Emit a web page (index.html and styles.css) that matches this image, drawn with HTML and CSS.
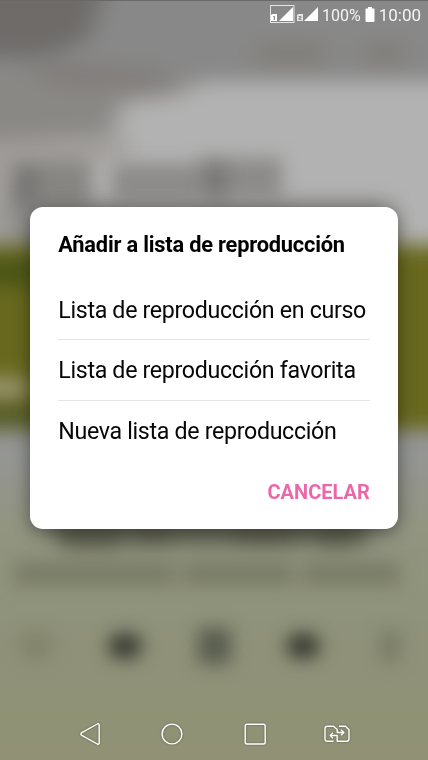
FILE: index.html
```html
<!DOCTYPE html>
<html lang="es">
<head>
    <meta charset="UTF-8">
    <meta name="viewport" content="width=device-width, initial-scale=1.0">
    <title>Añadir a lista de reproducción</title>
    <link rel="stylesheet" href="styles.css">
</head>
<body>
    <div class="screen">
        <!-- blurred music player behind the dialog -->
        <svg class="backdrop" viewBox="0 0 428 760" aria-hidden="true">
            <defs>
                <linearGradient id="player" x1="0" y1="430" x2="0" y2="760" gradientUnits="userSpaceOnUse">
                    <stop offset="0" stop-color="#96969a"/>
                    <stop offset="0.3" stop-color="#919580"/>
                    <stop offset="0.65" stop-color="#8f9279"/>
                    <stop offset="1" stop-color="#919275"/>
                </linearGradient>
                <filter id="soft" x="-60" y="-60" width="550" height="880" filterUnits="userSpaceOnUse" color-interpolation-filters="sRGB">
                    <feGaussianBlur stdDeviation="12 10"/>
                </filter>
                <filter id="fine" x="-60" y="-60" width="550" height="880" filterUnits="userSpaceOnUse" color-interpolation-filters="sRGB">
                    <feGaussianBlur stdDeviation="9"/>
                </filter>
            </defs>
            <g filter="url(#soft)">
                <rect x="-60" y="-60" width="550" height="520" fill="#b2b2b2"/>
                <rect x="-60" y="-60" width="550" height="141" fill="#888888"/>
                <path d="M-60-60H122L88 38L55 52L20 56H-60z" fill="#6e6b69"/>
                <path d="M-60 66H150L200 84L172 96L122 102L112 135L-60 142z" fill="#8a8885"/>
                <path d="M10 58L165 70V88H60z" fill="#7d7976" opacity="0.7"/>
                <path d="M-60 139H128V158H-60z" fill="#a09c98"/>
                <path d="M-60 156H90V250H-60z" fill="#a19e9b"/>
                <path d="M10 200H390V250H10z" fill="#8f8e8c"/>
                <path d="M258 43H325V63H258zM365 43H405V63H365z" fill="#7e7a72" opacity="0.8"/>
                <rect x="-60" y="245" width="550" height="185" fill="#68691e"/>
                <rect x="-60" y="258" width="95" height="28" fill="#4a5416"/>
                <rect x="-60" y="379" width="90" height="18" fill="#a39c7e"/>
                <rect x="-60" y="405" width="95" height="22" fill="#555b28"/>
                <rect x="-60" y="430" width="550" height="430" fill="url(#player)"/>
            </g>
            <g filter="url(#fine)">
                <path d="M12 162H90V210H12zM112 164H196V202H112zM196 158H282V199H196z" fill="#7c7a77" opacity="0.7"/>
                <path d="M14 168H38V206H14zM204 160H228V202H204z" fill="#6a6865" opacity="0.5"/>
                <path d="M55 516H368V546H55z" fill="#5c5e4c" opacity="0.75"/>
                <path d="M65 530H120V549H65zM138 530H168V546H138zM235 530H292V546H235zM320 530H352V548H320z" fill="#4d4f40" opacity="0.55"/>
                <path d="M14 562H175V585H14zM182 562H294V585H182zM302 562H400V585H302z" fill="#696b56" opacity="0.6"/>
                <ellipse cx="36" cy="646" rx="18" ry="16" fill="#76785f" opacity="0.5"/>
                <ellipse cx="125" cy="646" rx="17" ry="13" fill="#363830"/>
                <rect x="198" y="628" width="33" height="36" fill="#53564a" opacity="0.9"/>
                <ellipse cx="303" cy="646" rx="17" ry="13" fill="#363830"/>
                <rect x="380" y="631" width="20" height="30" fill="#6b6d5a" opacity="0.65"/>
            </g>
        </svg>

        <div class="status-bar">
            <svg class="signals" width="50" height="20" viewBox="0 0 50 20">
                <rect x="0.5" y="0.5" width="23.5" height="17" fill="none" stroke="#e4e4e4"/>
                <path d="M23 2V16H9z" fill="#fff"/>
                <path d="M1 16V10L2.5 9H7V16z" fill="#fff"/>
                <path d="M3.5 11.8L4.3 11V15" fill="none" stroke="#777"/>
                <path d="M48 2V16H34z" fill="#fff"/>
                <path d="M27 16V10L28.5 9H33V16z" fill="#e6e6e6"/>
                <path d="M28.5 11.5H31V13H29V14.5H31.5" fill="none" stroke="#777" stroke-width="0.8"/>
            </svg>
            <span class="percent">100%</span>
            <svg class="battery" width="10" height="16" viewBox="0 0 10 16">
                <path d="M3 0H7V1.5H9Q9.5 1.5 9.5 2V14Q9.5 15 8.5 15H1.5Q0.5 15 0.5 14V2Q0.5 1.5 1 1.5H3z" fill="#fff"/>
            </svg>
            <span class="clock">10:00</span>
        </div>

        <div class="dialog" role="dialog">
            <h1 class="dialog-title">Añadir a lista de reproducción</h1>
            <ul class="options">
                <li class="option">Lista de reproducción en curso</li>
                <li class="option">Lista de reproducción favorita</li>
                <li class="option">Nueva lista de reproducción</li>
            </ul>
            <button class="cancel-btn">CANCELAR</button>
        </div>

        <div class="nav-bar">
            <svg width="28" height="28" viewBox="0 0 28 28">
                <path d="M21.3 4Q23.2 3.3 23.2 5.3V22.7Q23.2 24.7 21.3 24L5.8 15.4Q4 14 5.8 12.6z"/>
            </svg>
            <svg width="28" height="28" viewBox="0 0 28 28">
                <circle cx="14" cy="14" r="9.9"/>
            </svg>
            <svg width="28" height="28" viewBox="0 0 28 28">
                <rect x="4.2" y="4.2" width="20" height="19.8" rx="1.8"/>
            </svg>
            <svg width="28" height="28" viewBox="0 0 28 28">
                <path d="M10.5 21.3H4.5Q2 21.3 2 18.8V8.8Q2 6.3 4.5 6.3H10.5L14.2 9.5V12.5H20.5M18 9.8L20.8 12.5L18 15.2"/>
                <path d="M16 6.3H22.5L26 9.8V18.8Q26 21.3 23.5 21.3H14.2V15.5H7.5M10 12.8L7.2 15.5L10 18.2"/>
            </svg>
        </div>
    </div>
</body>
</html>
```
FILE: styles.css
```css
body {
    margin: 0;
    font-family: Roboto, sans-serif;
}
.screen {
    position: relative;
    display: flex;
    flex-direction: column;
    align-items: center;
    width: 428px;
    height: 760px;
    overflow: hidden;
    background-color: #8f9279;
}
.screen > * {
    position: relative;
    box-sizing: border-box;
}
.screen > .backdrop {
    position: absolute;
    top: 0;
    left: 0;
    width: 100%;
    height: 100%;
}
.status-bar {
    display: flex;
    align-items: flex-start;
    justify-content: flex-end;
    width: 100%;
    height: 207px;
    padding: 4px 7px 0 0;
    color: #f4f4f4;
    border-top: 1px solid #686868;
}
.signals {
    margin-right: 2px;
}
.percent {
    font-size: 16px;
    line-height: 22px;
    margin-right: 4px;
}
.battery {
    margin: 2px 4px 0 0;
}
.clock {
    font-size: 17px;
    line-height: 21px;
}
.dialog {
    display: flex;
    flex-direction: column;
    width: 368px;
    height: 322px;
    margin-right: 0.5px;
    padding: 26px 28px 0 28.5px;
    border-radius: 13px;
    background-color: #fff;
    box-shadow: 0 4px 18px rgba(0, 0, 0, 0.45);
}
.dialog-title {
    margin: 0 0 23px;
    font-size: 21.8px;
    line-height: 24px;
    font-weight: 700;
    letter-spacing: -0.2px;
    color: #000;
    white-space: nowrap;
}
.options {
    margin: 0;
    padding: 0;
    list-style: none;
}
.option {
    box-sizing: border-box;
    height: 60.4px;
    line-height: 60.5px;
    font-size: 23.2px;
    letter-spacing: -0.32px;
    color: #060606;
    white-space: nowrap;
    border-bottom: 1px solid #e4e4e4;
}
.option:last-child {
    border-bottom: none;
}
.cancel-btn {
    align-self: flex-end;
    margin-top: 19px;
    padding: 0;
    border: none;
    background: none;
    font-family: inherit;
    font-size: 20px;
    line-height: 24px;
    font-weight: 700;
    color: #ea68a9;
    cursor: pointer;
}
.nav-bar {
    display: flex;
    gap: 54.5px;
    margin-top: 191px;
    margin-right: 1px;
}
.nav-bar svg {
    fill: none;
    stroke: #fff;
    stroke-width: 1.4;
    stroke-linejoin: round;
    filter: drop-shadow(0 0 1px rgba(0, 0, 0, 0.35));
}
```
